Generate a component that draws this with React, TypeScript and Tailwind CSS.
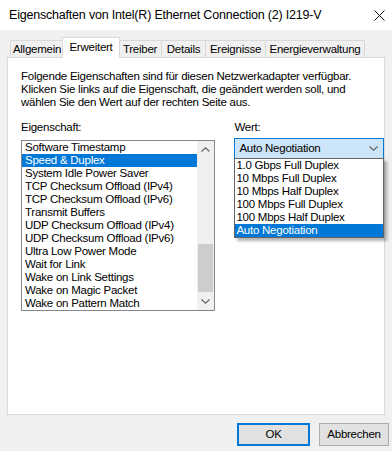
import React from "react";

const properties = [
  "Software Timestamp",
  "Speed & Duplex",
  "System Idle Power Saver",
  "TCP Checksum Offload (IPv4)",
  "TCP Checksum Offload (IPv6)",
  "Transmit Buffers",
  "UDP Checksum Offload (IPv4)",
  "UDP Checksum Offload (IPv6)",
  "Ultra Low Power Mode",
  "Wait for Link",
  "Wake on Link Settings",
  "Wake on Magic Packet",
  "Wake on Pattern Match",
];

const values = [
  "1.0 Gbps Full Duplex",
  "10 Mbps Full Duplex",
  "10 Mbps Half Duplex",
  "100 Mbps Full Duplex",
  "100 Mbps Half Duplex",
  "Auto Negotiation",
];

const tabs = [
  { label: "Allgemein", w: "w-[54px]" },
  { label: "Erweitert", w: "w-[58px]", active: true },
  { label: "Treiber", w: "w-[44px]" },
  { label: "Details", w: "w-[45px]" },
  { label: "Ereignisse", w: "w-[61px]" },
  { label: "Energieverwaltung", w: "w-[100px]" },
];

function Chevron({ up = false }: { up?: boolean }) {
  return (
    <svg width="9" height="5" viewBox="0 0 9 5" className="block">
      <path
        d={up ? "M0.5 4.5 L4.5 0.8 L8.5 4.5" : "M0.5 0.5 L4.5 4.2 L8.5 0.5"}
        fill="none"
        stroke="#606060"
        strokeWidth="1.1"
      />
    </svg>
  );
}

export default function App() {
  return (
    <div className="w-[392px] h-[451px] bg-[#f0f0f0] flex flex-col text-[11.5px] leading-[13px] text-black tracking-[-0.25px] font-['Liberation_Sans',Arial,sans-serif] overflow-hidden">
      {/* title bar */}
      <div className="h-[30px] bg-white flex items-center justify-between pl-[9px] pr-[6px] shrink-0">
        <span className="text-[12.5px] tracking-[-0.2px]">
          Eigenschaften von Intel(R) Ethernet Connection (2) I219-V
        </span>
        <svg width="11" height="11" viewBox="0 0 11 11" className="mr-[1px]">
          <path d="M0.5 0.5 L10.5 10.5 M10.5 0.5 L0.5 10.5" stroke="#111" strokeWidth="1" />
        </svg>
      </div>

      {/* tabs */}
      <div className="px-[7px] pt-[7px]">
        <div className="flex items-end h-[20px] pl-[3px]">
          {tabs.map((t) =>
            t.active ? (
              <div
                key={t.label}
                className={`${t.w} h-[21px] -mb-px -ml-[2px] -mr-[1px] relative z-10 bg-white border border-b-0 border-[#d9d9d9] flex items-start justify-center pt-[3px]`}
              >
                {t.label}
              </div>
            ) : (
              <div
                key={t.label}
                className={`${t.w} h-[17px] -ml-px first:ml-0 bg-[#f0f0f0] border border-b-0 border-[#d9d9d9] flex items-center justify-center pt-[1px]`}
              >
                {t.label}
              </div>
            )
          )}
        </div>

        {/* panel */}
        <div className="h-[358px] bg-white border border-[#d9d9d9] pl-[13px] pt-[12px] relative">
          <p>
            Folgende Eigenschaften sind für diesen Netzwerkadapter verfügbar.
            <br />
            Klicken Sie links auf die Eigenschaft, die geändert werden soll, und
            <br />
            wählen Sie den Wert auf der rechten Seite aus.
          </p>

          <div className="flex mt-[12px]">
            {/* left column */}
            <div className="w-[195px]">
              <div className="h-[13px]">Eigenschaft:</div>
              <div className="mt-[6px] h-[171px] border border-[#828790] flex">
                <div className="flex-1 flex flex-col">
                  {properties.map((p, i) => (
                    <div
                      key={p}
                      className={`h-[13px] pl-[3px] whitespace-nowrap ${
                        i === 1 ? "bg-[#0078d7] text-white" : ""
                      }`}
                    >
                      {p}
                    </div>
                  ))}
                </div>
                <div className="w-[17px] bg-[#f0f0f0] flex flex-col items-center">
                  <div className="h-[17px] flex items-center justify-center">
                    <Chevron up />
                  </div>
                  <div className="flex-1 w-full px-[1px] flex flex-col">
                    <div className="h-[86px]" />
                    <div className="h-[48px] bg-[#cdcdcd]" />
                  </div>
                  <div className="h-[17px] flex items-center justify-center">
                    <Chevron />
                  </div>
                </div>
              </div>
            </div>

            {/* right column */}
            <div className="ml-[19px] w-[150px]">
              <div className="h-[13px]">Wert:</div>
              <div className="relative mt-[4px]">
                <div className="h-[21px] bg-[#cce4f7] border border-[#0078d7] flex items-center justify-between pl-[4px] pr-[5px]">
                  <span>Auto Negotiation</span>
                  <Chevron />
                </div>
                <div className="absolute left-0 top-[20px] w-[150px] bg-white border border-[#646464] shadow-[3px_3px_3px_rgba(0,0,0,0.3)] z-20">
                  {values.map((v, i) => (
                    <div
                      key={v}
                      className={`h-[13px] pl-[1px] whitespace-nowrap ${
                        i === 5 ? "bg-[#0078d7] text-white" : ""
                      }`}
                    >
                      {v}
                    </div>
                  ))}
                </div>
              </div>
            </div>
          </div>
        </div>
      </div>

      {/* buttons */}
      <div className="flex justify-end gap-[9px] pr-[3px] mt-[8px]">
        <button className="w-[73px] h-[23px] bg-[#e1e1e1] border-2 border-[#0078d7] flex items-center justify-center">
          OK
        </button>
        <button className="w-[70px] h-[23px] bg-[#e1e1e1] border border-[#adadad] flex items-center justify-center">
          Abbrechen
        </button>
      </div>
    </div>
  );
}
